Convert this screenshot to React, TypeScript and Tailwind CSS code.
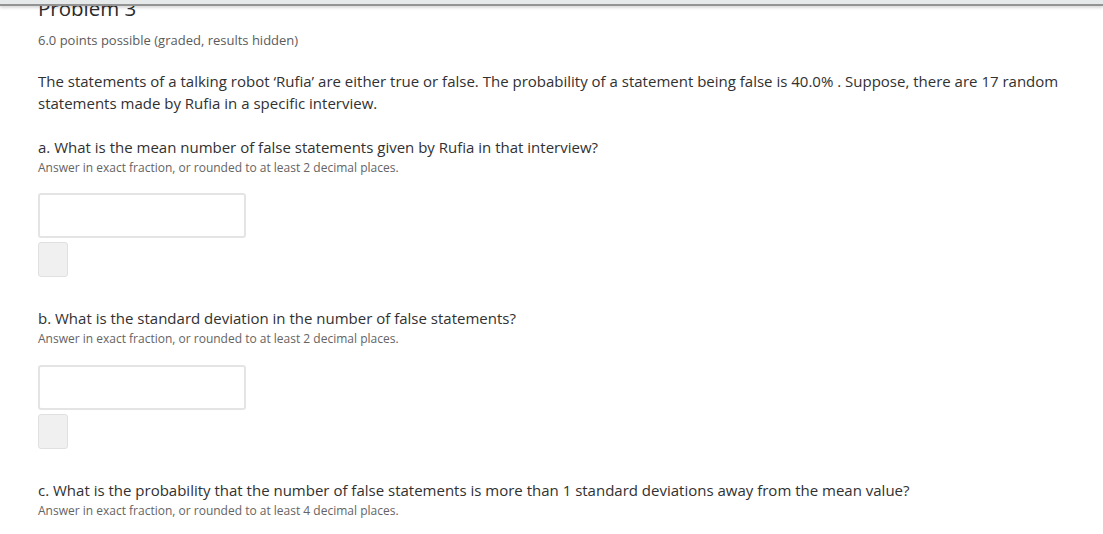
import React from 'react';

interface PartProps {
  label: string;
  hint: string;
  withInput?: boolean;
}

function Part({ label, hint, withInput = true }: PartProps) {
  return (
    <div>
      <p className="mt-[30px] text-[15px] leading-[22px] text-[#313131]">{label}</p>
      <p className="mt-[1px] text-[12px] leading-[17px] text-[#646464]">{hint}</p>
      {withInput && (
        <>
          <input
            type="text"
            className="mt-[18px] block w-[208px] h-[45px] border-2 border-[#e4e4e4] rounded-[3px] bg-white outline-none"
          />
          <button className="mt-[4px] block w-[30px] h-[35px] bg-[#f0f0f0] border border-[#e0e0e0] rounded-[3px]"></button>
        </>
      )}
    </div>
  );
}

export default function App() {
  return (
    <div className="relative w-full h-[534px] overflow-hidden bg-white" style={{ fontFamily: '"Open Sans", "Noto Sans", sans-serif' }}>
      {/* sticky header strip over the top of the page */}
      <div className="absolute top-0 left-0 right-0 h-[6px] bg-[#e5e9ea] border-b-2 border-[#939393] shadow-[0_2px_3px_rgba(0,0,0,0.15)]"></div>

      <div className="pl-[38px] pr-4">
        <h2 className="-mt-[2px] text-[20.5px] leading-[20px] text-[#2b2b2b]">Problem 3</h2>
        <p className="mt-[13px] text-[13px] leading-[18px] text-[#5b5b5b]">6.0 points possible (graded, results hidden)</p>

        <p className="mt-[21px] text-[15px] leading-[22px] text-[#313131]">
          The statements of a talking robot ‘Rufia’ are either true or false. The probability of a statement being false is 40.0% . Suppose, there are 17 random statements made by Rufia in a specific interview.
        </p>

        <p className="mt-[22px] text-[15px] leading-[22px] text-[#313131]">a. What is the mean number of false statements given by Rufia in that interview?</p>
        <p className="mt-[1px] text-[12px] leading-[17px] text-[#646464]">Answer in exact fraction, or rounded to at least 2 decimal places.</p>
        <input
          type="text"
          className="mt-[17px] block w-[208px] h-[45px] border-2 border-[#e4e4e4] rounded-[3px] bg-white outline-none"
        />
        <button className="mt-[4px] block w-[30px] h-[35px] bg-[#f0f0f0] border border-[#e0e0e0] rounded-[3px]"></button>

        <Part
          label="b. What is the standard deviation in the number of false statements?"
          hint="Answer in exact fraction, or rounded to at least 2 decimal places."
        />
        <Part
          label="c. What is the probability that the number of false statements is more than 1 standard deviations away from the mean value?"
          hint="Answer in exact fraction, or rounded to at least 4 decimal places."
          withInput={false}
        />
      </div>
    </div>
  );
}
